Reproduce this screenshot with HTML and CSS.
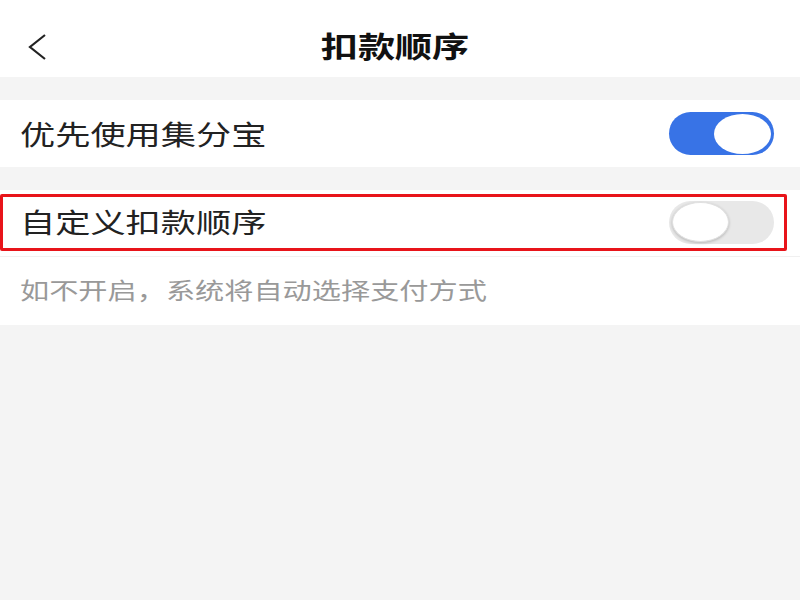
FILE: index.html
```html
<!DOCTYPE html>
<html lang="zh">
<head>
<meta charset="utf-8">
<link rel="stylesheet" href="styles.css">
</head>
<body>
<div class="page">
  <header class="nav">
    <span class="back">
      <svg width="20" height="26" viewBox="0 0 20 26"><path d="M18 1 L3 13 L18 25" fill="none" stroke="#222" stroke-width="2.2" stroke-linejoin="miter"/></svg>
    </span>
    <h1 class="title">扣款顺序</h1>
  </header>
  <div class="gap"></div>
  <div class="row">
    <span class="label">优先使用集分宝</span>
    <span class="switch on"><span class="knob"></span></span>
  </div>
  <div class="gap"></div>
  <div class="row row2">
    <div class="highlight">
      <span class="label">自定义扣款顺序</span>
      <span class="switch off"><span class="knob"></span></span>
    </div>
  </div>
  <div class="note"><span class="note-text">如不开启，系统将自动选择支付方式</span></div>
</div>
</body>
</html>
```

FILE: styles.css
```css
* { box-sizing: border-box; margin: 0; padding: 0; }
html, body { width: 800px; height: 600px; background: #f4f4f4; overflow: hidden; }
body { font-family: "Noto Sans CJK SC", "Noto Sans", sans-serif; color: #222; }
.page { display: flex; flex-direction: column; }
.nav {
  height: 77px; background: #fff; display: flex; justify-content: center;
  position: relative;
}
.back { position: absolute; left: 27px; top: 34px; display: flex; }
.title {
  font-size: 29px; font-weight: 700; color: #111; line-height: 1;
  transform: scaleX(1.28); margin-left: -10px; margin-top: 31px; align-self: flex-start;
}
.gap { height: 23px; }
.row {
  height: 67px; background: #fff; display: flex; align-items: center; justify-content: space-between;
  padding: 0 26px 0 20px;
}
.label {
  font-size: 27.5px; color: #222; line-height: 1; display: inline-block;
  transform: scaleX(1.28); transform-origin: left center;
}
.switch {
  width: 105px; height: 43px; border-radius: 22px; display: flex; align-items: center; padding: 0 3px;
}
.switch .knob { width: 57px; height: 40px; border-radius: 50%; background: #fff; }
.switch.on { background: #3873e6; justify-content: flex-end; }
.switch.off { background: #e8e8e8; justify-content: flex-start; }
.switch.off .knob { box-shadow: 0 1px 3px rgba(0,0,0,0.22); border: 1px solid #e0e0e0; }
.row2 { padding: 4px 0 6px 0; border-bottom: 1px solid #f0f0f0; }
.highlight {
  width: 787px; height: 57px; border: 3px solid #e8141a; border-radius: 2px;
  display: flex; align-items: center; justify-content: space-between;
  padding: 0 10px 0 17px;
}
.note {
  height: 68px; background: #fff; padding: 0 20px; display: flex; align-items: center;
}
.note-text {
  font-size: 22.8px; color: #999; line-height: 1; display: inline-block;
  transform: scaleX(1.28); transform-origin: left center; margin-top: -2px;
}
```
